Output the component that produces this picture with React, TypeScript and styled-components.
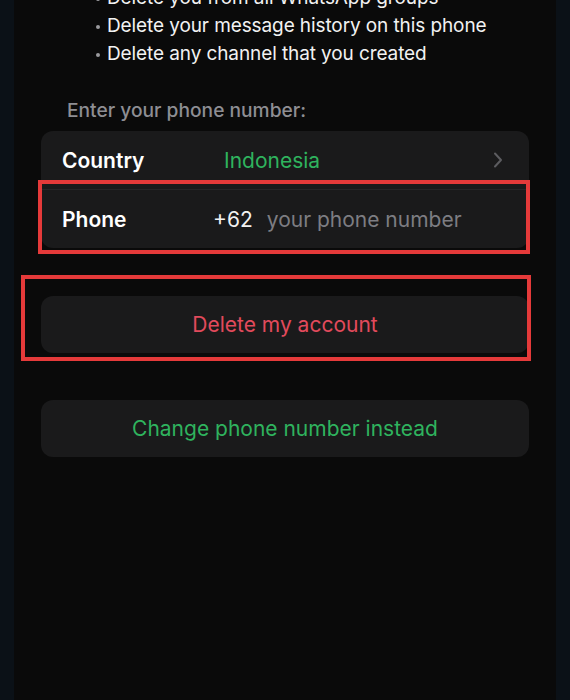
import styled, { createGlobalStyle } from 'styled-components';

const GlobalStyle = createGlobalStyle`
  html, body {
    margin: 0;
    padding: 0;
    background: #0b1117;
  }
  body {
    font-family: Inter, "Noto Sans", "Liberation Sans", sans-serif;
    -webkit-font-smoothing: antialiased;
  }
`;

const Screen = styled.div`
  margin: 0 14px;
  height: 700px;
  overflow: hidden;
  background: #0a0a0a;
  padding: 0 27px;
  box-sizing: border-box;
`;

const Bullets = styled.ul`
  list-style: none;
  margin: -16px 0 0;
  padding: 0 0 0 55px;
  li {
    position: relative;
    padding-left: 11px;
    color: #f2f2f2;
    font-size: 19px;
    line-height: 28px;
    letter-spacing: -0.1px;
  }
  li::before {
    content: '';
    position: absolute;
    left: 0;
    top: 13px;
    width: 4px;
    height: 4px;
    border-radius: 50%;
    background: #9a9a9e;
  }
`;

const Label = styled.p`
  margin: 31px 0 0 26px;
  color: #8e8e93;
  font-size: 19.2px;
  font-weight: 500;
  line-height: 22px;
`;

const Card = styled.div`
  margin-top: 10px;
  background: #1a1a1b;
  border-radius: 12px;
`;

const Row = styled.div<{ $divider?: boolean }>`
  position: relative;
  display: grid;
  grid-template-columns: 151px auto 1fr auto;
  align-items: center;
  height: 58px;
  padding: 0 26px 0 21px;
  border-top: ${({ $divider }) => ($divider ? '1px solid #262628' : 'none')};
  font-size: 21px;
`;

const RowLabel = styled.span`
  color: #ffffff;
  font-weight: 600;
`;

const Country = styled.span`
  grid-column: 2 / 4;
  padding-left: 11px;
  color: #2fb35e;
`;

const Code = styled.span`
  color: #f2f2f2;
  padding-right: 14px;
`;

const Placeholder = styled.span`
  color: #7d7d82;
`;

const Annotation = styled.div<{ $t: number; $r: number; $b: number; $l: number }>`
  position: absolute;
  top: ${({ $t }) => $t}px;
  right: ${({ $r }) => $r}px;
  bottom: ${({ $b }) => $b}px;
  left: ${({ $l }) => $l}px;
  border: 4px solid #e53a3a;
  pointer-events: none;
`;

const Actions = styled.div`
  display: flex;
  flex-direction: column;
  gap: 47px;
  margin-top: 48px;
`;

const ActionButton = styled.button<{ $tone: 'danger' | 'accent' }>`
  position: relative;
  display: block;
  width: 100%;
  height: 57px;
  border: none;
  border-radius: 12px;
  background: #1a1a1b;
  color: ${({ $tone }) => ($tone === 'danger' ? '#e24a5c' : '#2fb35e')};
  font-family: inherit;
  font-size: 21px;
  cursor: pointer;
`;

const Chevron = () => (
  <svg width="10" height="16" viewBox="0 0 10 16" fill="none">
    <path d="M2 1.5 L8 8 L2 14.5" stroke="#5c5c60" strokeWidth="2" strokeLinecap="round" strokeLinejoin="round" />
  </svg>
);

export default function App() {
  return (
    <>
      <GlobalStyle />
      <Screen>
        <Bullets>
          <li>Delete you from all WhatsApp groups</li>
          <li>Delete your message history on this phone</li>
          <li>Delete any channel that you created</li>
        </Bullets>
        <Label>Enter your phone number:</Label>
        <Card>
          <Row>
            <RowLabel>Country</RowLabel>
            <Country>Indonesia</Country>
            <Chevron />
          </Row>
          <Row $divider>
            <RowLabel>Phone</RowLabel>
            <Code>+62</Code>
            <Placeholder>your phone number</Placeholder>
            <Annotation $t={-10} $r={-1} $b={-6} $l={-3} />
          </Row>
        </Card>
        <Actions>
          <ActionButton $tone="danger">
            Delete my account
            <Annotation $t={-21} $r={-2} $b={-8} $l={-20} />
          </ActionButton>
          <ActionButton $tone="accent">Change phone number instead</ActionButton>
        </Actions>
      </Screen>
    </>
  );
}
